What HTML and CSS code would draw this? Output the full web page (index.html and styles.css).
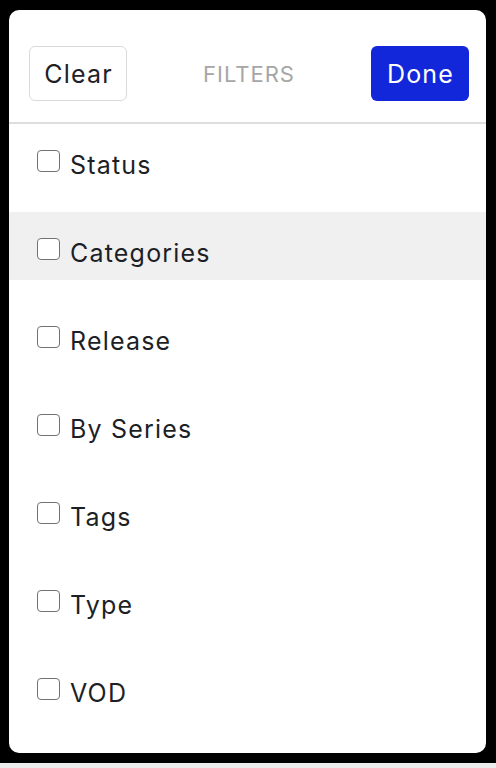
FILE: index.html
```html
<!DOCTYPE html>
<html lang="en">
<head>
<meta charset="utf-8">
<title>Filters</title>
<link rel="stylesheet" href="styles.css">
</head>
<body>
<div class="frame">
  <div class="panel">
    <header class="header">
      <button class="btn btn-clear" type="button">Clear</button>
      <div class="title">FILTERS</div>
      <button class="btn btn-done" type="button">Done</button>
    </header>
    <ul class="list">
      <li class="item"><span class="box"></span><span class="label">Status</span></li>
      <li class="item item-hover"><span class="box"></span><span class="label">Categories</span></li>
      <li class="item"><span class="box"></span><span class="label">Release</span></li>
      <li class="item"><span class="box"></span><span class="label">By Series</span></li>
      <li class="item"><span class="box"></span><span class="label">Tags</span></li>
      <li class="item"><span class="box"></span><span class="label">Type</span></li>
      <li class="item"><span class="box"></span><span class="label">VOD</span></li>
    </ul>
  </div>
</div>
<div class="strip"></div>
</body>
</html>
```
FILE: styles.css
```css
* { box-sizing: border-box; }
html, body {
  margin: 0;
  padding: 0;
  background: #000;
  width: 496px;
  height: 768px;
  overflow: hidden;
  font-family: Inter, "Liberation Sans", sans-serif;
}
.frame {
  padding: 10px 10px 10px 9px;
  height: 763px;
}
.panel {
  background: #fff;
  height: 743px;
  border-radius: 10px;
  overflow: hidden;
}
.strip {
  height: 5px;
  background: #ececec;
}
.header {
  display: flex;
  align-items: center;
  justify-content: space-between;
  padding: 36px 17px 21px 20px;
  border-bottom: 2px solid #dedede;
}
.btn {
  width: 98px;
  height: 55px;
  border-radius: 6px;
  font-family: Inter, "Liberation Sans", sans-serif;
  font-size: 25px;
  letter-spacing: 1.2px;
  padding: 0 0 0 1px;
  margin: 0;
  cursor: pointer;
}
.btn-clear {
  background: #fff;
  border: 1.5px solid #dadada;
  color: #1f2128;
}
.btn-done {
  background: #1327da;
  border: none;
  color: #fff;
}
.title {
  color: #a6a6a6;
  font-size: 22px;
  letter-spacing: 1px;
  padding-left: 0;
}
.list {
  list-style: none;
  margin: 0;
  padding: 0;
}
.item {
  display: flex;
  align-items: center;
  height: 68px;
  margin-bottom: 20px;
  padding: 25px 0 11px 28px;
}
.item-hover {
  background: #f0f0f0;
}
.box {
  width: 23px;
  height: 22px;
  border: 1.5px solid #727272;
  border-radius: 4px;
  background: #fff;
  margin-right: 10px;
  margin-bottom: 8px;
  flex: none;
}
.label {
  font-size: 25px;
  line-height: 32px;
  letter-spacing: 1.2px;
  color: #1d1f26;
}
```
